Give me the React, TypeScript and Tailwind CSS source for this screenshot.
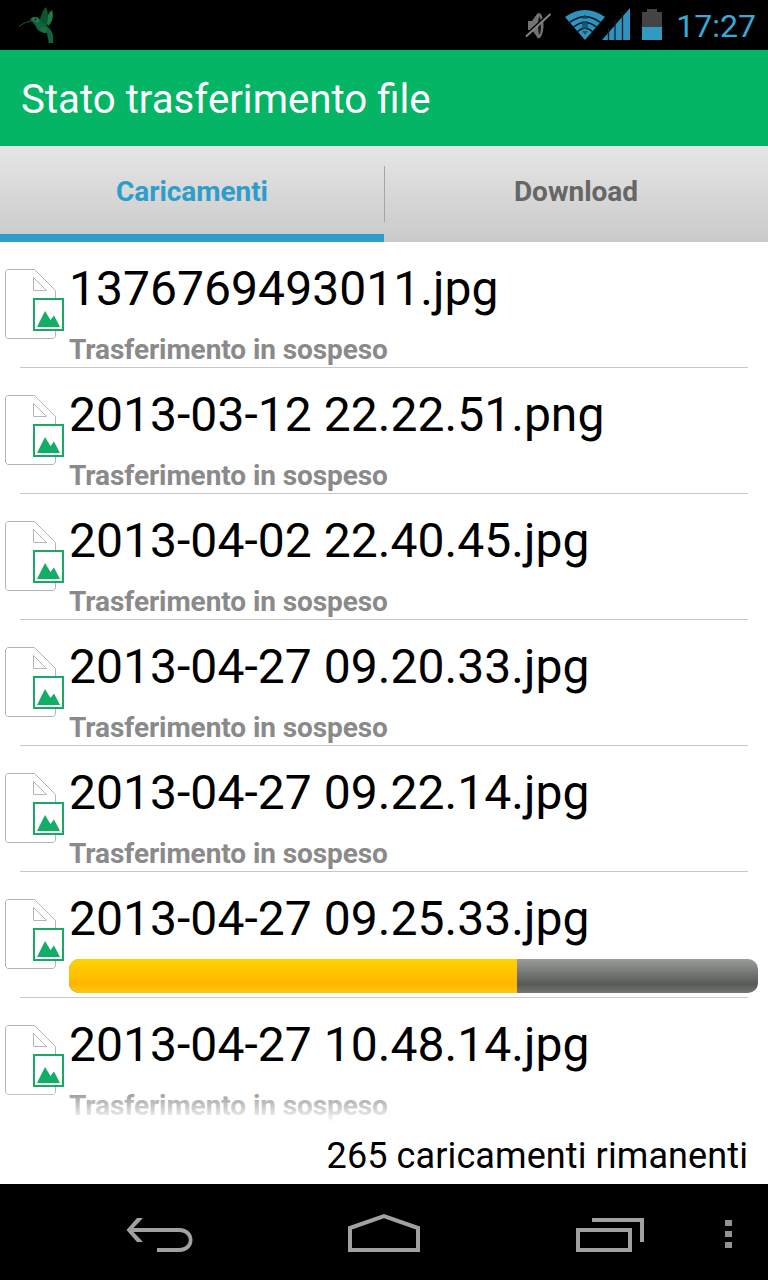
const files = [
  { name: "1376769493011.jpg" },
  { name: "2013-03-12 22.22.51.png" },
  { name: "2013-04-02 22.40.45.jpg" },
  { name: "2013-04-27 09.20.33.jpg" },
  { name: "2013-04-27 09.22.14.jpg" },
  { name: "2013-04-27 09.25.33.jpg", progress: 65 },
  { name: "2013-04-27 10.48.14.jpg" },
];

function HummingbirdIcon() {
  return (
    <svg width="36" height="38" viewBox="0 0 36 38">
      <path d="M0 19.500C4 16.500 8 14.500 12 14" fill="none" stroke="#2b6b49" strokeWidth="0.8" />
      <path d="M28 17C27.500 10 29 6 33 3C35 9 33.500 15 29 19Z" fill="#1d7b48" />
      <path d="M20 17C21 9 24 3 27 0C29.500 5 29.500 12 27 20Z" fill="#0f5430" />
      <path d="M11 13C12.500 9.500 18 8.500 20.500 12C22.500 15.500 26 16 28.500 19.500C33 23 35 28 34 36H29.500C30 32 28 30 28 26C23 26.500 18.500 24 16.500 19C15 16 13 14.500 11 13Z" fill="#11613a" />
      <path d="M12.500 12C15 9.500 19 10.500 20.500 13.500C19.500 16 17 16 15.500 14Z" fill="#238052" />
      <circle cx="16.500" cy="12.500" r="0.900" fill="#03180d" />
      <path d="M21 21C24 19 28 20 29 23L27 25.500C24 25.500 21.500 23.500 21 21Z" fill="#1a7040" />
    </svg>
  );
}

function MutedIcon() {
  return (
    <svg width="27" height="28" viewBox="0 0 27 28">
      <path d="M3 10H7L12 3C14 0 18.500 3 18.500 14C18.500 25 14 30 12 26L7 19H3Z" fill="#727272" />
      <ellipse cx="14.500" cy="14.500" rx="1.500" ry="9" fill="#161616" />
      <path d="M0 24.500L24 2.500" stroke="#000" strokeWidth="2" />
      <path d="M1 25.500L25.500 3" stroke="#858585" strokeWidth="2" />
    </svg>
  );
}

function WifiIcon() {
  return (
    <svg width="40" height="31" viewBox="0 0 40 31">
      <path d="M0 8Q20 -6 40 8L20 31Z" fill="#3093bd" />
      <g fill="none" stroke="#03131a" strokeWidth="1.500">
        <path d="M4.500 13.500Q20 2 35.500 13.500" />
        <path d="M8.500 18Q20 9 31.500 18" />
        <path d="M12.500 22.500Q20 16 27.500 22.500" />
      </g>
      <path d="M20 5L23 10H17ZM17 12H23V20H17ZM17 22H23L20 26Z" fill="#174c62" opacity="0.800" />
    </svg>
  );
}

function SignalIcon() {
  return (
    <svg width="28" height="32" viewBox="0 0 28 32">
      <path d="M0 32L28 0V32Z" fill="#3093bd" />
      <path d="M6.500 20V32M13 12V32M20.500 4V32" stroke="#06202b" strokeWidth="1.300" />
    </svg>
  );
}

function BatteryIcon() {
  return (
    <svg width="20" height="31" viewBox="0 0 20 31">
      <path d="M0 3H5V0H15V3H20V18H0Z" fill="#444" />
      <path d="M0 18H20V31H0Z" fill="#3299c4" />
    </svg>
  );
}

function ImageFileIcon() {
  return (
    <svg width="60" height="72" viewBox="0 0 60 72" className="ml-[5px] mt-[27px] shrink-0">
      <path d="M2.500 0.500H29.500L50.500 21.500V67.500L48.500 69.500H2.500L0.500 67.500V2.500Z" fill="#fff" stroke="#b4b4b4" />
      <path d="M28.500 8.500V21.500H41.500Z" fill="#fff" stroke="#b4b4b4" />
      <rect x="29" y="30" width="29" height="31" fill="#fff" stroke="#1aa865" strokeWidth="2" />
      <path d="M32 58L40 42L45.500 51L49 46.500L55 58Z" fill="#12ae67" />
    </svg>
  );
}

function TransferRow({ name, progress }: { name: string; progress?: number }) {
  return (
    <li className="relative flex h-[126px] shrink-0">
      <ImageFileIcon />
      <div className="ml-1 flex-1 pt-[19px]">
        <div className="whitespace-nowrap text-[48px] leading-[56px] tracking-[0.04px] text-black">{name}</div>
        {progress === undefined ? (
          <div className="mt-4 whitespace-nowrap text-[28px] font-bold leading-[33px] tracking-[-0.08px] text-[#8a8a8a]">
            Trasferimento in sospeso
          </div>
        ) : (
          <div className="mr-2.5 mt-3 h-[34px] overflow-hidden rounded-[10px] bg-linear-to-b from-[#9b9c9a] via-[#585b56] via-75% to-[#747672]">
            <div
              className="h-full bg-linear-to-b from-[#ffd300] via-[#ffb600] via-75% to-[#ffc711]"
              style={{ width: `${progress}%` }}
            />
          </div>
        )}
      </div>
      <div className="absolute bottom-0 left-5 right-5 h-px bg-[#c8c8c8]" />
    </li>
  );
}

export default function App() {
  return (
    <div className="flex h-[1280px] w-[768px] flex-col overflow-hidden bg-white font-['Roboto',sans-serif]">
      <div className="flex h-[50px] shrink-0 items-start bg-black pl-[19px] pr-3">
        <div className="pt-[7px]">
          <HummingbirdIcon />
        </div>
        <div className="ml-auto flex items-start">
          <div className="mr-[13px] pt-[11px]"><MutedIcon /></div>
          <div className="pt-[9px]"><WifiIcon /></div>
          <div className="-ml-[3px] pt-2"><SignalIcon /></div>
          <div className="ml-3 pt-[9px]"><BatteryIcon /></div>
          <span className="ml-[14px] pt-[7px] text-[32px] leading-[38px] text-[#3ba9d7]">17:27</span>
        </div>
      </div>

      <header className="flex h-24 shrink-0 items-center bg-[#04b565] pl-[21px] pt-[3px] text-white">
        <h1 className="whitespace-nowrap text-[40.25px] leading-[48px]">Stato trasferimento file</h1>
      </header>

      <div className="relative flex h-24 shrink-0 bg-linear-to-b from-[#e6e6e6] to-[#cacaca] text-[28px] font-bold">
        <div className="flex flex-1 items-center justify-center border-b-8 border-[#2f9dca] pt-1 tracking-[-0.05px] text-[#2f9dca]">
          <span>Caricamenti</span>
        </div>
        <div className="flex flex-1 items-center justify-center pb-1 text-[#666]">
          <span>Download</span>
        </div>
        <div className="absolute left-[384px] top-5 h-14 w-px bg-[#a5a5a5]" />
      </div>

      <main className="relative h-[882px] shrink-0 overflow-hidden">
        <ul className="flex flex-col">
          {files.map((f) => <TransferRow key={f.name} name={f.name} progress={f.progress} />)}
        </ul>
        <div className="absolute inset-x-0 bottom-0 h-9 bg-linear-to-b from-white/0 to-white to-95%" />
      </main>

      <div className="flex h-[60px] shrink-0 items-center justify-end pr-5 pt-1 text-[36px] leading-[42px] tracking-[0.1px] text-black">
        <span>265 caricamenti rimanenti</span>
      </div>

      <nav className="flex h-24 shrink-0 items-start bg-black">
        <svg width="68" height="36" viewBox="0 0 68 36" fill="#a1a1a1" className="ml-[126px] mt-[34px]">
          <path d="M11 0H17L7.500 10H53C71 10 71 34 53 34H31V30H53C66 30 66 14 53 14H7.500L17 24H11L0.500 12Z" />
        </svg>
        <svg width="74" height="40" viewBox="0 0 74 40" fill="none" stroke="#a1a1a1" strokeWidth="4" className="ml-[153px] mt-7">
          <path d="M3 16L37 4L71 16V38H3Z" />
        </svg>
        <svg width="70" height="36" viewBox="0 0 70 36" fill="none" stroke="#a1a1a1" strokeWidth="4" className="ml-[155px] mt-8">
          <path d="M2 14H54V34H2ZM16 4H66V26" />
        </svg>
        <svg width="8" height="30" viewBox="0 0 8 30" fill="#929292" className="ml-[79px] mt-9">
          <path d="M0 0H7V6H0ZM0 11H7V17H0ZM0 22H7V28H0Z" />
        </svg>
      </nav>
    </div>
  );
}
